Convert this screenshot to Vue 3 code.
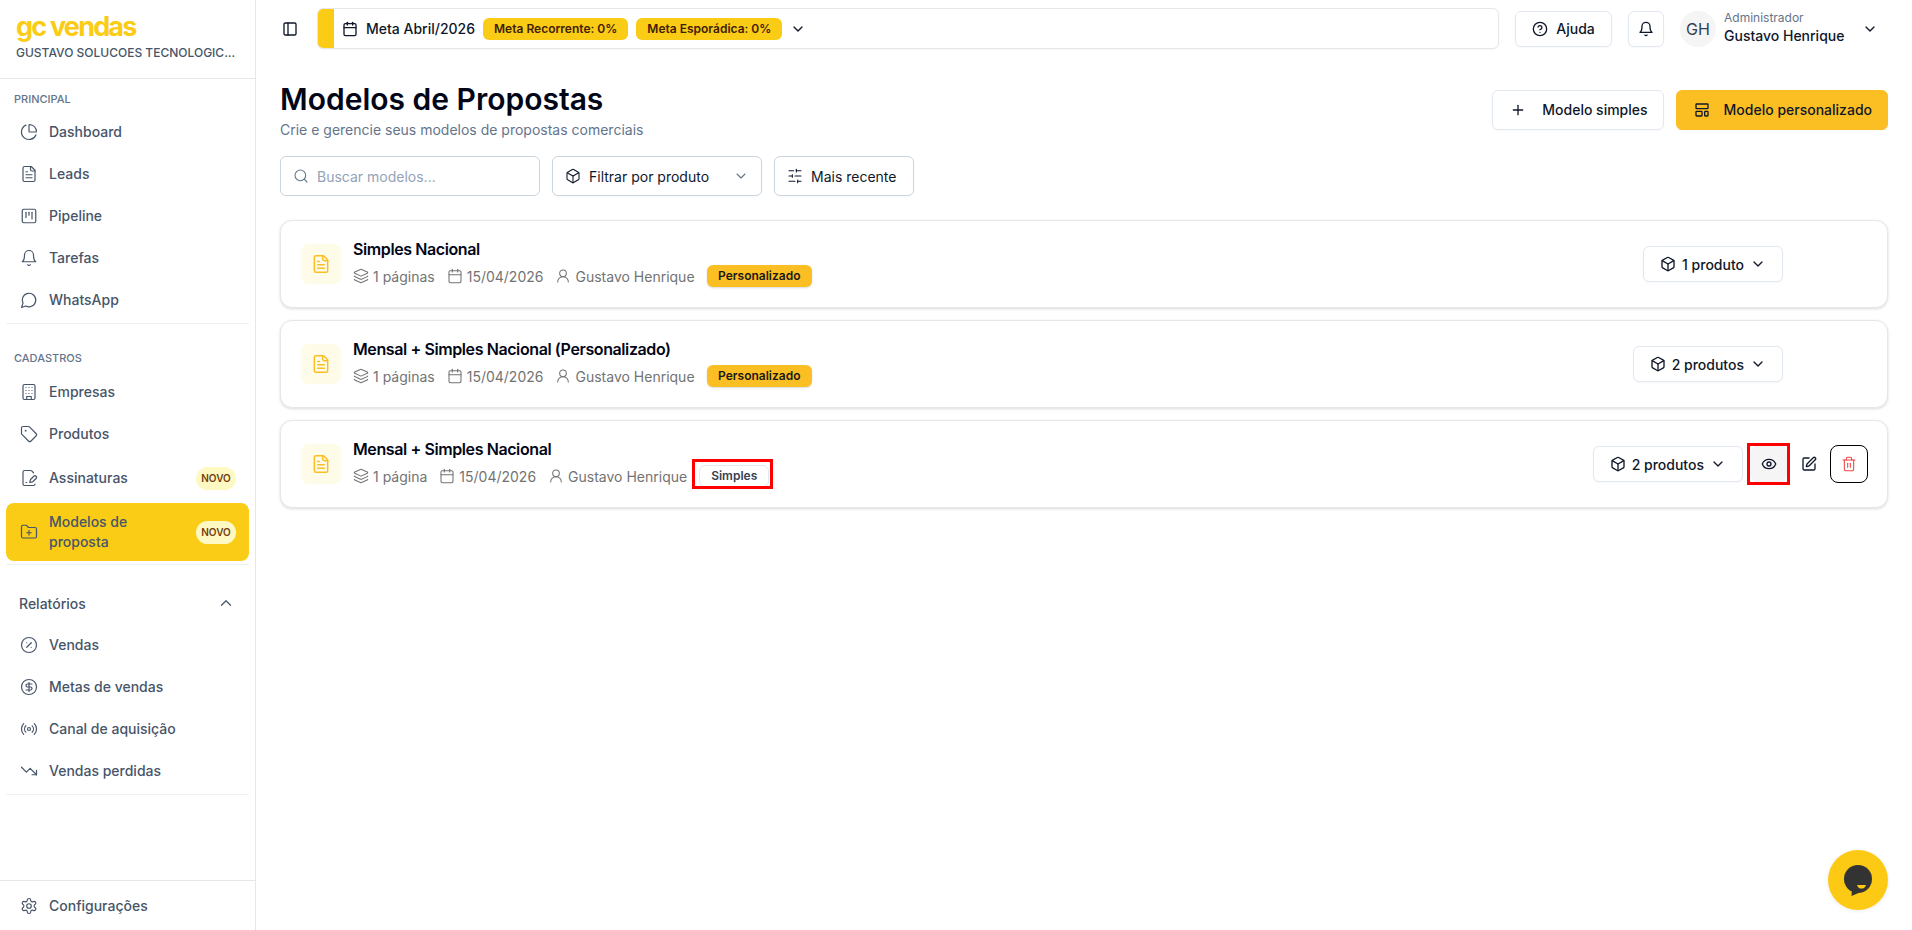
<script setup>
import { h } from 'vue'

const icons = {
  panel: '<rect x="3" y="3" width="18" height="18" rx="2"/><path d="M9 3v18"/>',
  pie: '<path d="M21 12c.552 0 1.005-.449.95-.998a10 10 0 0 0-8.953-8.951c-.55-.055-.998.398-.998.95v8a1 1 0 0 0 1 1z"/><path d="M21.21 15.89A10 10 0 1 1 8 2.83"/>',
  file: '<path d="M15 2H6a2 2 0 0 0-2 2v16a2 2 0 0 0 2 2h12a2 2 0 0 0 2-2V7Z"/><path d="M14 2v4a2 2 0 0 0 2 2h4"/><path d="M10 9H8"/><path d="M16 13H8"/><path d="M16 17H8"/>',
  kanban: '<rect x="3" y="3" width="18" height="18" rx="2"/><path d="M8 7v7"/><path d="M12 7v4"/><path d="M16 7v9"/>',
  bell: '<path d="M6 8a6 6 0 0 1 12 0c0 7 3 9 3 9H3s3-2 3-9"/><path d="M10.3 21a1.94 1.94 0 0 0 3.4 0"/>',
  chat: '<path d="M7.9 20A9 9 0 1 0 4 16.1L2 22Z"/>',
  building: '<rect x="4" y="2" width="16" height="20" rx="2"/><path d="M9 22v-4h6v4"/><path d="M8 6h.01"/><path d="M16 6h.01"/><path d="M12 6h.01"/><path d="M12 10h.01"/><path d="M12 14h.01"/><path d="M16 10h.01"/><path d="M16 14h.01"/><path d="M8 10h.01"/><path d="M8 14h.01"/>',
  tag: '<path d="M12.586 2.586A2 2 0 0 0 11.172 2H4a2 2 0 0 0-2 2v7.172a2 2 0 0 0 .586 1.414l8.704 8.704a2.426 2.426 0 0 0 3.42 0l6.58-6.58a2.426 2.426 0 0 0 0-3.42z"/><circle cx="7.5" cy="7.5" r=".5" fill="currentColor"/>',
  sign: '<path d="m18 5-2.414-2.414A2 2 0 0 0 14.172 2H6a2 2 0 0 0-2 2v16a2 2 0 0 0 2 2h12a2 2 0 0 0 2-2"/><path d="M21.378 12.626a1 1 0 0 0-3.004-3.004l-4.01 4.012a2 2 0 0 0-.506.854l-.837 2.87a.5.5 0 0 0 .62.62l2.87-.837a2 2 0 0 0 .854-.506z"/><path d="M8 18h1"/>',
  folder: '<path d="M12 10v6"/><path d="M9 13h6"/><path d="M20 20a2 2 0 0 0 2-2V8a2 2 0 0 0-2-2h-7.9a2 2 0 0 1-1.69-.9L9.6 3.9A2 2 0 0 0 7.93 3H4a2 2 0 0 0-2 2v13a2 2 0 0 0 2 2Z"/>',
  up: '<path d="m18 15-6-6-6 6"/>',
  down: '<path d="m6 9 6 6 6-6"/>',
  percent: '<circle cx="12" cy="12" r="10"/><path d="m15 9-6 6"/><path d="M9 9h.01"/><path d="M15 15h.01"/>',
  dollar: '<circle cx="12" cy="12" r="10"/><path d="M16 8h-6a2 2 0 1 0 0 4h4a2 2 0 1 1 0 4H8"/><path d="M12 18V6"/>',
  radio: '<path d="M4.9 19.1C1 15.2 1 8.8 4.9 4.9"/><path d="M7.8 16.2c-2.3-2.3-2.3-6.1 0-8.5"/><circle cx="12" cy="12" r="2"/><path d="M16.2 7.8c2.3 2.3 2.3 6.1 0 8.5"/><path d="M19.1 4.9C23 8.8 23 15.1 19.1 19"/>',
  trend: '<path d="M16 17h6v-6"/><path d="m22 17-8.5-8.5-5 5L2 7"/>',
  gear: '<path d="M12.22 2h-.44a2 2 0 0 0-2 2v.18a2 2 0 0 1-1 1.73l-.43.25a2 2 0 0 1-2 0l-.15-.08a2 2 0 0 0-2.73.73l-.22.38a2 2 0 0 0 .73 2.73l.15.1a2 2 0 0 1 1 1.72v.51a2 2 0 0 1-1 1.74l-.15.09a2 2 0 0 0-.73 2.73l.22.38a2 2 0 0 0 2.73.73l.15-.08a2 2 0 0 1 2 0l.43.25a2 2 0 0 1 1 1.73V20a2 2 0 0 0 2 2h.44a2 2 0 0 0 2-2v-.18a2 2 0 0 1 1-1.73l.43-.25a2 2 0 0 1 2 0l.15.08a2 2 0 0 0 2.73-.73l.22-.39a2 2 0 0 0-.73-2.73l-.15-.08a2 2 0 0 1-1-1.74v-.5a2 2 0 0 1 1-1.74l.15-.09a2 2 0 0 0 .73-2.73l-.22-.38a2 2 0 0 0-2.73-.73l-.15.08a2 2 0 0 1-2 0l-.43-.25a2 2 0 0 1-1-1.73V4a2 2 0 0 0-2-2z"/><circle cx="12" cy="12" r="3"/>',
  calendar: '<path d="M8 2v4"/><path d="M16 2v4"/><rect x="3" y="4" width="18" height="18" rx="2"/><path d="M3 10h18"/>',
  help: '<circle cx="12" cy="12" r="10"/><path d="M9.09 9a3 3 0 0 1 5.83 1c0 2-3 3-3 3"/><path d="M12 17h.01"/>',
  plus: '<path d="M5 12h14"/><path d="M12 5v14"/>',
  layout: '<rect x="3" y="3" width="18" height="7" rx="1"/><rect x="3" y="14" width="9" height="7" rx="1"/><rect x="16" y="14" width="5" height="7" rx="1"/>',
  search: '<circle cx="11" cy="11" r="8"/><path d="m21 21-4.3-4.3"/>',
  box: '<path d="M21 8a2 2 0 0 0-1-1.73l-7-4a2 2 0 0 0-2 0l-7 4A2 2 0 0 0 3 8v8a2 2 0 0 0 1 1.73l7 4a2 2 0 0 0 2 0l7-4A2 2 0 0 0 21 16Z"/><path d="m3.3 7 8.7 5 8.7-5"/><path d="M12 22V12"/>',
  sliders: '<path d="M21 4h-7"/><path d="M10 4H3"/><path d="M21 12h-9"/><path d="M8 12H3"/><path d="M21 20h-5"/><path d="M12 20H3"/><path d="M14 2v4"/><path d="M8 10v4"/><path d="M16 18v4"/>',
  layers: '<path d="M12.83 2.18a2 2 0 0 0-1.66 0L2.6 6.08a1 1 0 0 0 0 1.83l8.58 3.91a2 2 0 0 0 1.66 0l8.58-3.9a1 1 0 0 0 0-1.83z"/><path d="M2 12a1 1 0 0 0 .58.91l8.6 3.91a2 2 0 0 0 1.65 0l8.58-3.9A1 1 0 0 0 22 12"/><path d="M2 17a1 1 0 0 0 .58.91l8.6 3.91a2 2 0 0 0 1.65 0l8.58-3.9A1 1 0 0 0 22 17"/>',
  user: '<circle cx="12" cy="8" r="5"/><path d="M20 21a8 8 0 0 0-16 0"/>',
  eye: '<path d="M2.062 12.348a1 1 0 0 1 0-.696 10.75 10.75 0 0 1 19.876 0 1 1 0 0 1 0 .696 10.75 10.75 0 0 1-19.876 0"/><circle cx="12" cy="12" r="3"/>',
  pen: '<path d="M12 3H5a2 2 0 0 0-2 2v14a2 2 0 0 0 2 2h14a2 2 0 0 0 2-2v-7"/><path d="M18.375 2.625a1 1 0 0 1 3 3l-9.013 9.014a2 2 0 0 1-.853.505l-2.873.84a.5.5 0 0 1-.62-.62l.84-2.873a2 2 0 0 1 .506-.852z"/>',
  trash: '<path d="M3 6h18"/><path d="M19 6v14c0 1-1 2-2 2H7c-1 0-2-1-2-2V6"/><path d="M8 6V4c0-1 1-2 2-2h4c1 0 2 1 2 2v2"/><line x1="10" x2="10" y1="11" y2="17"/><line x1="14" x2="14" y1="11" y2="17"/>'
}

// icone lucide desenhado inline
const Icon = (props) => h('svg', {
  viewBox: '0 0 24 24',
  width: props.size || 16,
  height: props.size || 16,
  fill: 'none',
  stroke: 'currentColor',
  'stroke-width': props.sw || 2,
  'stroke-linecap': 'round',
  'stroke-linejoin': 'round',
  style: { flex: 'none', display: 'block' },
  innerHTML: icons[props.name]
})
Icon.props = ['name', 'size', 'sw']

const principal = [
  { label: 'Dashboard', icon: 'pie' },
  { label: 'Leads', icon: 'file' },
  { label: 'Pipeline', icon: 'kanban' },
  { label: 'Tarefas', icon: 'bell' },
  { label: 'WhatsApp', icon: 'chat' }
]
const relatorios = [
  { label: 'Vendas', icon: 'percent' },
  { label: 'Metas de vendas', icon: 'dollar' },
  { label: 'Canal de aquisição', icon: 'radio' },
  { label: 'Vendas perdidas', icon: 'trend' }
]
const modelos = [
  { id: 1, nome: 'Simples Nacional', paginas: '1 páginas', produtos: '1 produto', tipo: 'Personalizado' },
  { id: 2, nome: 'Mensal + Simples Nacional (Personalizado)', paginas: '1 páginas', produtos: '2 produtos', tipo: 'Personalizado' },
  { id: 3, nome: 'Mensal + Simples Nacional', paginas: '1 página', produtos: '2 produtos', tipo: 'Simples', hover: true }
]
</script>

<template>
  <div class="app">
    <aside class="sidebar">
      <div class="brand">
        <div class="logo">gc vendas</div>
        <div class="company">GUSTAVO SOLUCOES TECNOLOGIC...</div>
      </div>

      <nav class="group">
        <div class="group-label">PRINCIPAL</div>
        <a v-for="item in principal" :key="item.label" class="nav-item">
          <Icon :name="item.icon" :size="18" :sw="1.6" />
          <span>{{ item.label }}</span>
        </a>
      </nav>

      <nav class="group second">
        <div class="group-label">CADASTROS</div>
        <a class="nav-item"><Icon name="building" :size="18" :sw="1.6" /><span>Empresas</span></a>
        <a class="nav-item"><Icon name="tag" :size="18" :sw="1.6" /><span>Produtos</span></a>
        <a class="nav-item badge-row">
          <Icon name="sign" :size="18" :sw="1.6" /><span>Assinaturas</span><em class="novo">NOVO</em>
        </a>
        <a class="nav-item active">
          <Icon name="folder" :size="18" :sw="1.6" /><span>Modelos de proposta</span><em class="novo">NOVO</em>
        </a>
      </nav>

      <nav class="group third">
        <div class="collapse-head">
          <span>Relatórios</span>
          <Icon name="up" :size="18" :sw="1.6" />
        </div>
        <a v-for="item in relatorios" :key="item.label" class="nav-item">
          <Icon :name="item.icon" :size="18" :sw="1.6" />
          <span>{{ item.label }}</span>
        </a>
      </nav>

      <div class="side-footer">
        <a class="nav-item"><Icon name="gear" :size="18" :sw="1.6" /><span>Configurações</span></a>
      </div>
    </aside>

    <main class="main">
      <header class="topbar">
        <button class="toggle"><Icon name="panel" :size="16" /></button>
        <div class="meta-bar">
          <div class="strip"></div>
          <Icon name="calendar" :size="16" />
          <span class="meta-title">Meta Abril/2026</span>
          <span class="meta-pill">Meta Recorrente: 0%</span>
          <span class="meta-pill">Meta Esporádica: 0%</span>
          <Icon name="down" :size="16" />
        </div>
        <button class="btn help"><Icon name="help" :size="16" />Ajuda</button>
        <button class="btn bell"><Icon name="bell" :size="16" /></button>
        <div class="profile">
          <div class="avatar">GH</div>
          <div class="who">
            <small>Administrador</small>
            <strong>Gustavo Henrique</strong>
          </div>
          <Icon name="down" :size="16" />
        </div>
      </header>

      <section class="page-head">
        <div>
          <h1>Modelos de Propostas</h1>
          <p>Crie e gerencie seus modelos de propostas comerciais</p>
        </div>
        <div class="head-actions">
          <button class="btn big simple"><Icon name="plus" :size="16" />Modelo simples</button>
          <button class="btn big primary"><Icon name="layout" :size="16" />Modelo personalizado</button>
        </div>
      </section>

      <section class="toolbar">
        <label class="search">
          <Icon name="search" :size="16" :sw="1.6" />
          <input placeholder="Buscar modelos..." />
        </label>
        <button class="btn filter">
          <Icon name="box" :size="16" :sw="1.6" /><span>Filtrar por produto</span><Icon class="muted" name="down" :size="16" :sw="1.6" />
        </button>
        <button class="btn sort"><Icon name="sliders" :size="16" :sw="1.6" />Mais recente</button>
      </section>

      <section class="list">
        <article v-for="m in modelos" :key="m.id" class="card">
          <div class="file-box"><Icon name="file" :size="20" :sw="1.8" /></div>
          <div class="info">
            <h3>{{ m.nome }}</h3>
            <div class="meta">
              <span class="meta-item"><Icon name="layers" :size="16" :sw="1.6" />{{ m.paginas }}</span>
              <span class="meta-item"><Icon name="calendar" :size="16" :sw="1.6" />15/04/2026</span>
              <span class="meta-item"><Icon name="user" :size="16" :sw="1.6" />Gustavo Henrique</span>
              <span class="tipo" :class="{ simples: m.tipo === 'Simples' }">{{ m.tipo }}</span>
            </div>
          </div>
          <button class="btn products" :class="{ idle: !m.hover }">
            <Icon name="box" :size="16" />{{ m.produtos }}<Icon name="down" :size="16" />
          </button>
          <div v-if="m.hover" class="actions">
            <button class="act eye"><Icon name="eye" :size="16" /></button>
            <button class="act"><Icon name="pen" :size="16" /></button>
            <button class="act trash"><Icon name="trash" :size="16" :sw="1.6" /></button>
          </div>
        </article>
      </section>
    </main>

    <div class="chat-widget">
      <svg viewBox="0 0 60 60" width="60" height="60">
        <circle cx="30" cy="29" r="14" fill="#333" />
        <path d="M24 40l-.5 6 7-3z" fill="#333" />
        <path d="M29 35h9c-.7 2.500-2.300 3.600-4.500 3.600s-3.800-1.100-4.500-3.600z" fill="#fcca14" />
      </svg>
    </div>
  </div>
</template>

<style>
html, body {
  margin: 0;
  background: #fff;
}
</style>

<style scoped>
* {
  box-sizing: border-box;
}

.app {
  display: flex;
  height: 930px;
  overflow: hidden;
  font-family: Inter, "Liberation Sans", sans-serif;
  background: #fff;
  color: #0f172a;
}

button {
  font-family: inherit;
}

/* Sidebar */
.sidebar {
  width: 256px;
  flex: none;
  height: 100%;
  display: flex;
  flex-direction: column;
  border-right: 1px solid #e5e7eb;
  color: #475569;
}

.brand {
  height: 79px;
  padding: 12px 16px 0;
  border-bottom: 1px solid #e5e7eb;
}

.logo {
  font-size: 27px;
  line-height: 30px;
  font-weight: 700;
  letter-spacing: -1.8px;
  color: #facc15;
}

.company {
  margin-top: 3px;
  font-size: 12px;
  line-height: 16px;
  font-weight: 500;
  color: #475569;
  white-space: nowrap;
}

.group {
  margin: 0 6px;
  padding-top: 12px;
  padding-bottom: 3px;
  display: flex;
  flex-direction: column;
  gap: 2px;
  border-bottom: 1px solid #eef0f3;
}

.group.second {
  padding-top: 26px;
  padding-bottom: 3px;
}

.group.second .group-label {
  margin-bottom: 4px;
}

.group.third {
  padding-top: 18px;
}

.group-label {
  padding-left: 8px;
  margin-bottom: 3px;
  font-size: 11px;
  line-height: 16px;
  font-weight: 500;
  color: #64748b;
}

.nav-item {
  display: flex;
  align-items: center;
  gap: 11px;
  min-height: 40px;
  padding: 10px 13px 10px 14px;
  border-radius: 8px;
  font-size: 14px;
  line-height: 20px;
  font-weight: 500;
  color: #475569;
}

.nav-item.badge-row {
  min-height: 44px;
}

.nav-item.active {
  min-height: 58px;
  margin-top: 1px;
  padding-top: 9px;
  padding-bottom: 9px;
  background: #facc15;
}

.nav-item span {
  flex: 1;
}

.novo {
  flex: none;
  width: 40px;
  height: 23px;
  border-radius: 12px;
  background: #fef9c3;
  color: #713f12;
  font-style: normal;
  font-size: 10px;
  line-height: 23px;
  font-weight: 600;
  text-align: center;
}

.collapse-head {
  display: flex;
  align-items: center;
  justify-content: space-between;
  height: 40px;
  padding: 0 14px 0 13px;
  font-size: 14px;
  font-weight: 500;
}

.side-footer {
  margin-top: auto;
  height: 50px;
  padding: 5px 6px;
  border-top: 1px solid #e5e7eb;
}

/* Main */
.main {
  flex: 1;
  min-width: 0;
  padding: 0 24px;
}

.topbar {
  height: 57px;
  display: flex;
  align-items: center;
  gap: 16px;
}

.toggle {
  width: 20px;
  height: 20px;
  margin-right: 1px;
  padding: 2px;
  border: none;
  background: none;
  color: #0f172a;
}

.meta-bar {
  flex: 1;
  height: 41px;
  display: flex;
  align-items: center;
  gap: 8px;
  border: 1px solid #e5e7eb;
  border-radius: 6px;
  overflow: hidden;
  box-shadow: 0 1px 2px rgba(0, 0, 0, 0.04);
  font-size: 14px;
}

.strip {
  width: 16px;
  height: 100%;
  background: #facc15;
}

.meta-title {
  font-weight: 500;
}

.meta-pill {
  height: 22px;
  padding: 0 11px;
  border-radius: 6px;
  background: #facc15;
  color: #422006;
  font-size: 12px;
  line-height: 22px;
  font-weight: 600;
  white-space: nowrap;
}

.btn {
  display: flex;
  align-items: center;
  background: #fff;
  border: 1px solid #e2e8f0;
  border-radius: 6px;
  color: #0f172a;
  font-size: 14px;
  font-weight: 500;
  white-space: nowrap;
  box-shadow: 0 1px 2px rgba(0, 0, 0, 0.03);
}

.help {
  width: 97px;
  height: 36px;
  justify-content: center;
  gap: 8px;
}

.bell {
  width: 36px;
  height: 36px;
  justify-content: center;
}

.profile {
  width: 208px;
  display: flex;
  align-items: center;
  gap: 8px;
}

.avatar {
  width: 36px;
  height: 36px;
  flex: none;
  border-radius: 50%;
  background: #f5f5f5;
  font-size: 16px;
  line-height: 36px;
  text-align: center;
  color: #334155;
}

.who {
  flex: 1;
  display: flex;
  flex-direction: column;
  margin-bottom: 2px;
}

.who small {
  font-size: 12px;
  line-height: 16px;
  color: #64748b;
}

.who strong {
  font-size: 14px;
  line-height: 20px;
  font-weight: 500;
}

.profile > svg {
  margin-right: 10px;
}

.page-head {
  margin-top: 24px;
  display: flex;
  align-items: center;
  justify-content: space-between;
}

h1 {
  margin: 0;
  font-size: 30px;
  line-height: 36px;
  font-weight: 600;
  color: #020617;
}

.page-head p {
  margin: 3px 0 0;
  font-size: 14px;
  line-height: 20px;
  color: #64748b;
}

.head-actions {
  display: flex;
  gap: 12px;
  margin-bottom: 2px;
}

.btn.big {
  height: 40px;
  padding: 0 15px 0 17px;
  gap: 14px;
}

.btn.big.simple {
  gap: 16px;
}

.btn.primary {
  background: #fbbf24;
  border-color: #fbbf24;
}

.toolbar {
  margin-top: 16px;
  display: flex;
  gap: 12px;
}

.search {
  width: 260px;
  height: 40px;
  display: flex;
  align-items: center;
  gap: 8px;
  padding: 0 12px;
  border: 1px solid #cbd5e1;
  border-radius: 6px;
  color: #64748b;
}

.search input {
  flex: 1;
  min-width: 0;
  border: none;
  outline: none;
  padding: 0;
  font-family: inherit;
  font-size: 14px;
  color: #0f172a;
}

.search input::placeholder {
  color: #94a3b8;
}

.filter {
  width: 210px;
  height: 40px;
  padding: 0 12px;
  gap: 8px;
  border-color: #cbd5e1;
  font-weight: 400;
}

.filter span {
  flex: 1;
  text-align: left;
}

.muted {
  color: #64748b;
}

.sort {
  height: 40px;
  padding: 0 17px 0 12px;
  gap: 8px;
  border-color: #cbd5e1;
  font-weight: 400;
}

.list {
  margin-top: 24px;
  display: flex;
  flex-direction: column;
  gap: 12px;
}

.card {
  height: 88px;
  display: flex;
  align-items: center;
  padding: 0 19px 0 20px;
  border: 1px solid #e5e7eb;
  border-radius: 12px;
  background: #fff;
  box-shadow: 0 1px 3px rgba(0, 0, 0, 0.14);
}

.file-box {
  width: 40px;
  height: 40px;
  flex: none;
  display: flex;
  align-items: center;
  justify-content: center;
  border-radius: 8px;
  background: #fefce8;
  color: #fbbf24;
}

.info {
  flex: 1;
  margin-left: 12px;
  padding-bottom: 4px;
}

h3 {
  margin: 0 0 4px;
  font-size: 16px;
  line-height: 24px;
  font-weight: 600;
  letter-spacing: -0.4px;
  color: #020617;
}

.meta {
  height: 22px;
  display: flex;
  align-items: center;
  gap: 12px;
  font-size: 14px;
  color: #737373;
}

.meta-item {
  display: flex;
  align-items: center;
  gap: 4px;
}

.tipo {
  height: 22px;
  padding: 0 11.5px;
  border-radius: 6px;
  background: #fbbf24;
  color: #1c1917;
  font-size: 12px;
  line-height: 22px;
  font-weight: 600;
  box-shadow: 0 1px 2px rgba(0, 0, 0, 0.15);
}

.tipo.simples {
  position: relative;
  padding: 0 11px;
  background: #fff;
  border: 1px solid #e2e8f0;
  line-height: 20px;
  color: #374151;
  box-shadow: none;
}

/* marcacao vermelha da captura */
.tipo.simples::after {
  content: "";
  position: absolute;
  inset: -7px -5px -3px -8px;
  border: 3px solid #f00;
}

.products {
  height: 36px;
  padding: 0 16px;
  gap: 6px;
}

.products.idle {
  margin-right: 85px;
}

.actions {
  display: flex;
  align-items: center;
  gap: 4px;
  margin-left: 8px;
}

.act {
  width: 36px;
  height: 36px;
  display: flex;
  align-items: center;
  justify-content: center;
  border: none;
  border-radius: 6px;
  background: none;
  color: #0f172a;
}

.act.eye {
  position: relative;
  background: #f5f5f5;
}

.act.eye::after {
  content: "";
  position: absolute;
  inset: -3px -3px -3px -4px;
  border: 3px solid #f00;
}

.act.trash {
  width: 38px;
  height: 38px;
  margin-left: -1px;
  border: 1px solid #000;
  border-radius: 8px;
  color: #ef4444;
}

.chat-widget {
  position: fixed;
  left: 1828px;
  top: 850px;
  width: 60px;
  height: 60px;
  border-radius: 50%;
  background: #fcca14;
  box-shadow: 0 1px 4px rgba(0, 0, 0, 0.08);
}
</style>
